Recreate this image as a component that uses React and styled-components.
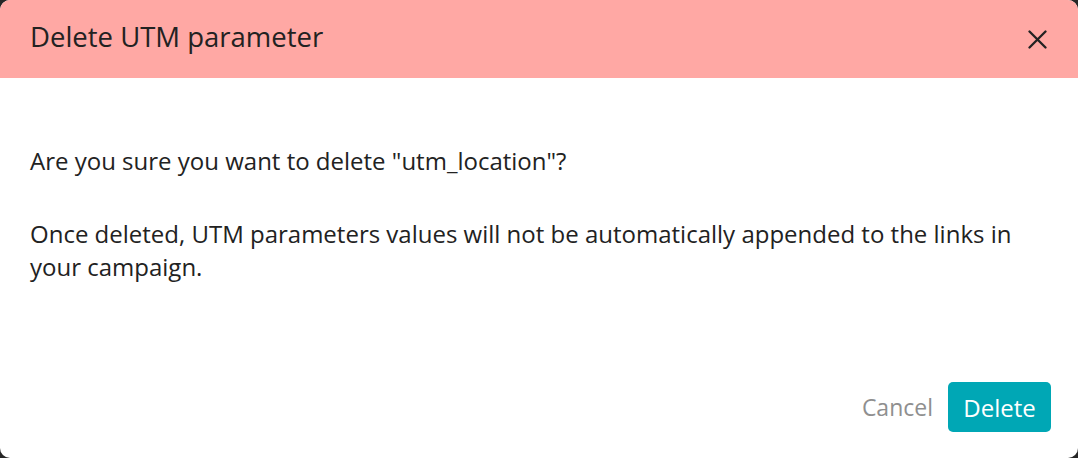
import React from "react";
import styled, { createGlobalStyle } from "styled-components";

const Global = createGlobalStyle`
  html, body { margin: 0; padding: 0; background: #262626; }
  body { font-family: "Open Sans", "Noto Sans", sans-serif; }
  #root { width: 1078px; height: 458px; }
`;

const Modal = styled.div`
  width: 1078px;
  height: 458px;
  background: #ffffff;
  border-radius: 10px;
  overflow: hidden;
  display: flex;
  flex-direction: column;
`;

const Header = styled.div`
  height: 78px;
  flex: none;
  background: #ffa8a4;
  display: flex;
  align-items: center;
  justify-content: space-between;
  padding: 0 31px 5px 30px;
  box-sizing: border-box;
`;

const Title = styled.h2`
  margin: 0;
  font-size: 27.5px;
  font-weight: 400;
  color: #222222;
`;

const CloseButton = styled.button`
  border: none;
  background: transparent;
  padding: 0;
  width: 19px;
  height: 19px;
  display: flex;
  align-items: center;
  justify-content: center;
  cursor: pointer;
  margin-top: 5px;
`;

const Body = styled.div`
  flex: 1;
  padding: 66px 30px 0 30px;
  box-sizing: border-box;
  display: flex;
  flex-direction: column;
`;

const Paragraph = styled.p`
  margin: 0 0 ${(p) => p.$gap || 0}px 0;
  font-size: 24px;
  line-height: 33px;
  color: #222222;
`;

const Footer = styled.div`
  display: flex;
  justify-content: flex-end;
  align-items: center;
  gap: 15px;
  padding: 0 27px 26px 0;
`;

const TextButton = styled.button`
  border: none;
  background: transparent;
  font-family: inherit;
  font-size: 23px;
  color: #8f8f8f;
  padding: 0;
  cursor: pointer;
`;

const PrimaryButton = styled.button`
  border: none;
  background: #00a7b5;
  color: #ffffff;
  font-family: inherit;
  font-size: 24px;
  height: 50px;
  width: 103px;
  border-radius: 5px;
  padding: 0;
  cursor: pointer;
`;

export default function App() {
  return (
    <>
      <Global />
      <Modal>
        <Header>
          <Title>Delete UTM parameter</Title>
          <CloseButton aria-label="Close">
            <svg width="19" height="19" viewBox="0 0 19 19">
              <path d="M1.5 1.5 L17.5 17.5 M17.5 1.5 L1.5 17.5" stroke="#222" strokeWidth="2.3" strokeLinecap="round" />
            </svg>
          </CloseButton>
        </Header>
        <Body>
          <Paragraph $gap={40}>Are you sure you want to delete "utm_location"?</Paragraph>
          <Paragraph>
            Once deleted, UTM parameters values will not be automatically appended to the links in your campaign.
          </Paragraph>
        </Body>
        <Footer>
          <TextButton>Cancel</TextButton>
          <PrimaryButton>Delete</PrimaryButton>
        </Footer>
      </Modal>
    </>
  );
}
